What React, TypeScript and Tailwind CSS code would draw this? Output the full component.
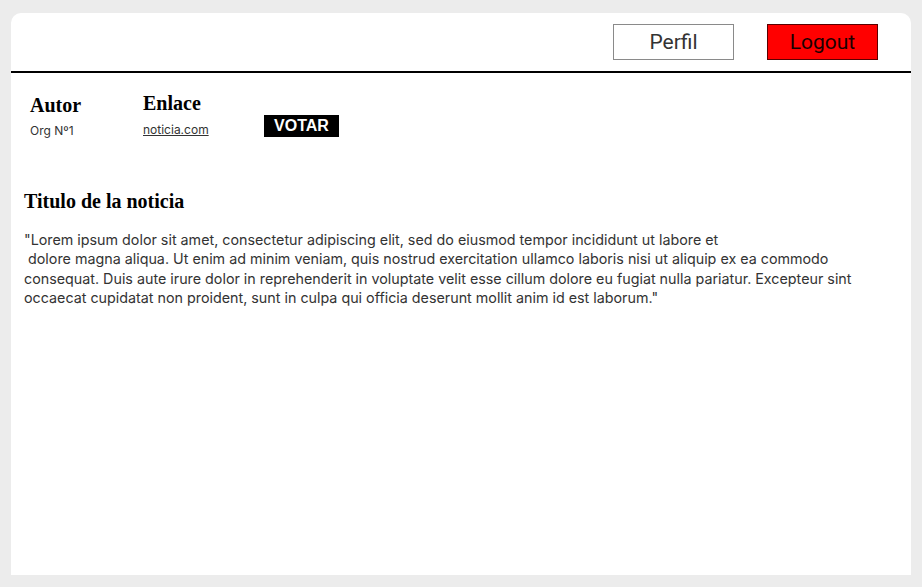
const serif = "font-['Liberation_Serif','Times_New_Roman',serif]";

function Header() {
  return (
    <header className="h-[60px] flex items-center justify-end gap-[33px] pr-[33px] border-b-2 border-black">
      <button className="h-[36px] w-[121px] border border-[#8a8a8a] bg-white text-[21px] font-normal text-[#333] font-['Roboto',sans-serif] leading-none">
        Perfil
      </button>
      <button className="h-[36px] w-[111px] border border-[#5a0000] bg-[#ff0000] text-[21px] font-normal text-[#1a0000] font-['Roboto',sans-serif] leading-none">
        Logout
      </button>
    </header>
  );
}

const App = () => {
  const texto =
    '"Lorem ipsum dolor sit amet, consectetur adipiscing elit, sed do eiusmod tempor incididunt ut labore et\n dolore magna aliqua. Ut enim ad minim veniam, quis nostrud exercitation ullamco laboris nisi ut aliquip ex ea commodo consequat. Duis aute irure dolor in reprehenderit in voluptate velit esse cillum dolore eu fugiat nulla pariatur. Excepteur sint occaecat cupidatat non proident, sunt in culpa qui officia deserunt mollit anim id est laborum."';

  return (
    <div className="min-h-screen bg-[#ececec] pt-[13px] px-[11px] pb-[12px] font-['Inter',sans-serif]">
      <div className="h-[562px] bg-white rounded-t-[10px] overflow-hidden">
        <Header />

        <main className="px-[13px]">
          {/* datos de la noticia */}
          <div className="flex items-start pt-[20px] pl-[6px]">
            <div className="w-[113px]">
              <h3 className={`${serif} text-[20px] font-bold leading-[24px] text-black`}>Autor</h3>
              <p className="mt-[6px] text-[12px] leading-[16px] text-[#333]">Org Nº1</p>
            </div>
            <div className="w-[121px] -mt-[2px]">
              <h3 className={`${serif} text-[20px] font-bold leading-[24px] text-black`}>Enlace</h3>
              <a href="#" className="block mt-[7px] text-[12px] leading-[16px] text-[#333] underline">
                noticia.com
              </a>
            </div>
            <button className="mt-[22px] h-[22px] w-[75px] bg-black text-white text-[16px] font-bold leading-none font-['Liberation_Sans',Arial,sans-serif]">
              VOTAR
            </button>
          </div>

          <h2 className={`${serif} mt-[50px] text-[20px] font-bold leading-[24px] text-black`}>
            Titulo de la noticia
          </h2>
          <p className="mt-[17px] text-[14.3px] leading-[19.4px] text-[#333] whitespace-pre-wrap">{texto}</p>
        </main>
      </div>
    </div>
  );
};

export default App;
